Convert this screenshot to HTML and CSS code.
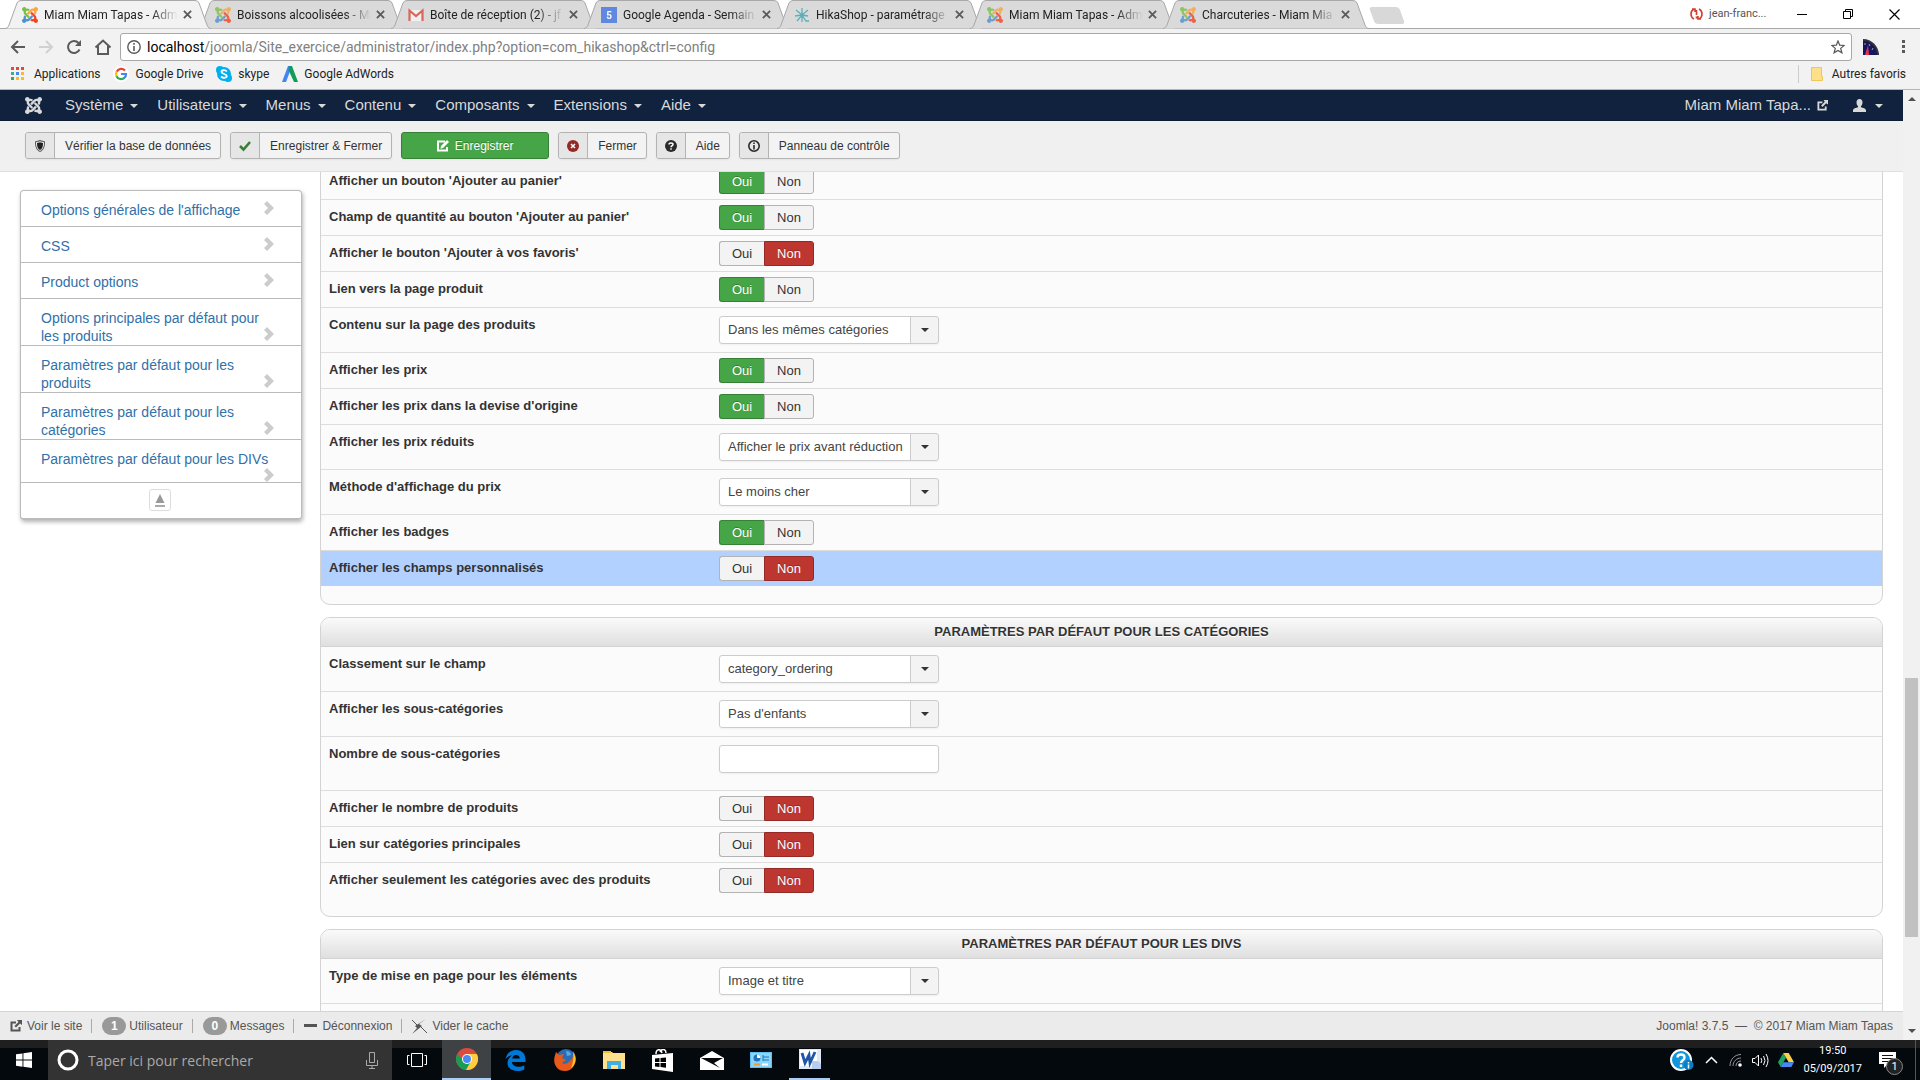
FILE: index.html
```html
<!DOCTYPE html>
<html lang="fr">
<head>
  <meta charset="UTF-8">
  <meta name="viewport" content="width=device-width, initial-scale=1.0">
  <link rel="stylesheet" href="styles.css">
  <title>Miam Miam Tapas - Administration</title>
</head>
<body>
<svg class="defs">
  <symbol id="joomla-arm" viewBox="0 0 24 24">
    <path d="M16.719 14.759L14.22 17.26l-2.37 2.37-.462.466c-1.368 1.365-3.297 1.83-5.047 1.397-.327 1.424-1.604 2.49-3.13 2.49C1.438 23.983 0 22.547 0 20.772c0-1.518 1.055-2.789 2.469-3.123-.446-1.76.016-3.705 1.396-5.08l.179-.18 2.37 2.37-.184.181c-.769.779-.769 2.024 0 2.789.771.78 2.022.78 2.787 0l.465-.465 2.367-2.371 2.502-2.506z"/>
  </symbol>
  <symbol id="joomla" viewBox="0 0 24 24">
    <g fill="#5091cd"><use href="#joomla-arm" width="24" height="24"/></g>
    <g fill="#7ac143" transform="rotate(90 12 12)"><use href="#joomla-arm" width="24" height="24"/></g>
    <g fill="#f9a541" transform="rotate(180 12 12)"><use href="#joomla-arm" width="24" height="24"/></g>
    <g fill="#f44321" transform="rotate(270 12 12)"><use href="#joomla-arm" width="24" height="24"/></g>
  </symbol>
  <symbol id="joomla-mono" viewBox="0 0 24 24">
    <use href="#joomla-arm" width="24" height="24"/>
    <g transform="rotate(90 12 12)"><use href="#joomla-arm" width="24" height="24"/></g>
    <g transform="rotate(180 12 12)"><use href="#joomla-arm" width="24" height="24"/></g>
    <g transform="rotate(270 12 12)"><use href="#joomla-arm" width="24" height="24"/></g>
  </symbol>
  <symbol id="tab-shape" viewBox="0 0 206 29" preserveAspectRatio="none">
    <path d="M0 28.500C3 28 3 27 4 25L12 3Q13 .5 16 .5H190Q193 .5 194 3L202 25C203 27 203 28 206 28.500"/>
  </symbol>
  <symbol id="cross" viewBox="0 0 10 10"><path d="M1 1l8 8M9 1l-8 8" stroke="currentColor" stroke-width="2"/></symbol>
  <symbol id="chevron" viewBox="0 0 10 14"><path d="M0 3l3-3 7 7-7 7-3-3 4-4z"/></symbol>
  <symbol id="external" viewBox="0 0 12 12">
    <path d="M6 2.500H1.500v8h8V7" fill="none" stroke="currentColor" stroke-width="2"/>
    <path d="M7 0h5v5l-2-1.500L6 7.500 4.500 6l4-4z"/>
  </symbol>
  <symbol id="chrome" viewBox="0 0 22 22">
    <circle cx="11" cy="11" r="11" fill="#dd4b3e"/>
    <path d="M1.500 5.500A11 11 0 0 0 10 22l4.700-8.500L11 11H6z" fill="#1a9c55"/>
    <path d="M11 6h9.800A11 11 0 0 1 10 22l5-9z" fill="#fdcd3f"/>
    <circle cx="11" cy="11" r="5" fill="#fff"/><circle cx="11" cy="11" r="4" fill="#4a8af4"/>
  </symbol>
</svg>

<!-- browser -->
<header class="browser">
  <div class="tabstrip">
    <div class="tab active">
      <svg class="tab-bg"><use href="#tab-shape"/></svg>
      <svg class="favicon"><use href="#joomla"/></svg><span class="tab-title">Miam Miam Tapas - Adm</span>
      <button class="tab-close" aria-label="Fermer l'onglet"><svg><use href="#cross"/></svg></button>
    </div>
    <div class="tab">
      <svg class="tab-bg"><use href="#tab-shape"/></svg>
      <svg class="favicon"><use href="#joomla"/></svg><span class="tab-title">Boissons alcoolisées - Mi</span>
      <button class="tab-close" aria-label="Fermer l'onglet"><svg><use href="#cross"/></svg></button>
    </div>
    <div class="tab">
      <svg class="tab-bg"><use href="#tab-shape"/></svg>
      <svg class="favicon" viewBox="0 0 16 16"><path d="M1 3h14v11H1z" fill="#f6f6f6"/><path d="M1.500 14V3.500L8 9l6.500-5.500V14" fill="none" stroke="#d9493c" stroke-width="2.200"/></svg><span class="tab-title">Boîte de réception (2) - jf</span>
      <button class="tab-close" aria-label="Fermer l'onglet"><svg><use href="#cross"/></svg></button>
    </div>
    <div class="tab">
      <svg class="tab-bg"><use href="#tab-shape"/></svg>
      <span class="favicon agenda">5</span><span class="tab-title">Google Agenda - Semain</span>
      <button class="tab-close" aria-label="Fermer l'onglet"><svg><use href="#cross"/></svg></button>
    </div>
    <div class="tab">
      <svg class="tab-bg"><use href="#tab-shape"/></svg>
      <svg class="favicon" viewBox="0 0 16 16"><path d="M8 1v14M2 3l6 5 6-5M1 9l7-1 6 1M3 14l5-6 4 6h3" fill="none" stroke="#3ba5b5" stroke-width="1.300"/></svg><span class="tab-title">HikaShop - paramétrage</span>
      <button class="tab-close" aria-label="Fermer l'onglet"><svg><use href="#cross"/></svg></button>
    </div>
    <div class="tab">
      <svg class="tab-bg"><use href="#tab-shape"/></svg>
      <svg class="favicon"><use href="#joomla"/></svg><span class="tab-title">Miam Miam Tapas - Adm</span>
      <button class="tab-close" aria-label="Fermer l'onglet"><svg><use href="#cross"/></svg></button>
    </div>
    <div class="tab">
      <svg class="tab-bg"><use href="#tab-shape"/></svg>
      <svg class="favicon"><use href="#joomla"/></svg><span class="tab-title">Charcuteries - Miam Mia</span>
      <button class="tab-close" aria-label="Fermer l'onglet"><svg><use href="#cross"/></svg></button>
    </div>
    <button class="new-tab" aria-label="Nouvel onglet"></button>
    <div class="window-tools">
      <svg width="13" height="12" viewBox="0 0 13 12"><path d="M4 1C0 3 0 9 4 11M9 1c4 2 4 8 0 10M2 1h3v3M11 11H8V8M6.500 2v5M6.500 8.500v2" fill="none" stroke="#d23f31" stroke-width="1.600"/></svg>
      <span class="profile">jean-franc...</span>
      <button aria-label="Réduire"><svg width="10" height="12"><path d="M0 6.500h10" stroke="#000"/></svg></button>
      <button aria-label="Restaurer"><svg width="10" height="10"><path d="M.5 2.500h7v7h-7zM2.500 2.500v-2h7v7h-2" fill="none" stroke="#000"/></svg></button>
      <button aria-label="Fermer"><svg width="11" height="11"><path d="M.5.5l10 10M10.500.5l-10 10" stroke="#000" stroke-width="1.200"/></svg></button>
    </div>
  </div>
  <div class="addressbar">
    <button aria-label="Précédent"><svg width="16" height="16" viewBox="0 0 16 16"><path d="M15 8H2M8 2L2 8l6 6" fill="none" stroke="#5a5a5a" stroke-width="2"/></svg></button>
    <button aria-label="Suivant"><svg width="16" height="16" viewBox="0 0 16 16"><path d="M1 8h13M8 2l6 6-6 6" fill="none" stroke="#d0d0d0" stroke-width="2"/></svg></button>
    <button aria-label="Actualiser"><svg width="16" height="16" viewBox="0 0 16 16"><path d="M13.500 10.500A6 6 0 1 1 12.500 4" fill="none" stroke="#5a5a5a" stroke-width="2"/><path d="M15 1v6H9z" fill="#5a5a5a"/></svg></button>
    <button aria-label="Accueil"><svg width="18" height="16" viewBox="0 0 18 16"><path d="M1.500 8.500L9 1.500l7.500 7M4 7v8h10V7" fill="none" stroke="#5a5a5a" stroke-width="2"/></svg></button>
    <div class="url">
      <svg width="14" height="14" viewBox="0 0 14 14"><circle cx="7" cy="7" r="6.200" fill="none" stroke="#5a5a5a" stroke-width="1.400"/><path d="M7 6v5M7 3v1.800" stroke="#5a5a5a" stroke-width="1.600"/></svg>
      <span class="url-text"><b>localhost</b>/joomla/Site_exercice/administrator/index.php?option=com_hikashop&amp;ctrl=config</span>
      <svg width="14" height="14" viewBox="0 0 14 14"><path d="M7 1l1.700 4.200 4.500.3-3.500 2.900 1.200 4.400L7 10.400l-3.900 2.400 1.200-4.400L.8 5.500l4.500-.3z" fill="none" stroke="#555" stroke-width="1.200"/></svg>
    </div>
    <svg width="16" height="16" viewBox="0 0 16 16"><path d="M0 16V0c9 0 15 7 16 15v1z" fill="#333"/><path d="M0 16V2c8 0 13 6 14 13v1z" fill="#16165e"/><path d="M2 16L5 6l1 10z" fill="#f0304a"/><path d="M1 5h2M6 5l1 2M10 9l-1 2" stroke="#9ab" /></svg>
    <svg class="menu-dots" width="4" height="14" viewBox="0 0 4 14"><path d="M0 0h3v3H0zM0 5h3v3H0zM0 10h3v3H0z" fill="#5a5a5a"/></svg>
  </div>
  <div class="bookmarks">
    <a href="#"><svg width="17" height="14" viewBox="0 0 17 14"><path d="M0 0h3v3H0zM5 0h3v3H5zM10 0h3v3h-3z" fill="#e8453c"/><path d="M0 5h3v3H0z" fill="#4a8"/><path d="M5 5h3v3H5z" fill="#4688f1"/><path d="M10 5h3v3h-3zM5 10h3v3H5zM10 10h3v3h-3z" fill="#f9bb2d"/><path d="M0 10h3v3H0z" fill="#3aa757"/></svg>Applications</a>
    <a href="#"><svg width="16" height="16" viewBox="0 0 16 16"><circle cx="8" cy="8" r="8" fill="#fff"/><g fill="none" stroke-width="2.200"><path d="M12 4.500A5 5 0 0 0 3.700 5.800" stroke="#ea4335"/><path d="M3.700 5.500a5 5 0 0 0 0 5" stroke="#fbbc05"/><path d="M3.500 10.200a5 5 0 0 0 8 1.500" stroke="#34a853"/><path d="M8 8h5a5 5 0 0 1-1.800 4" stroke="#4285f4"/></g></svg>Google Drive</a>
    <a href="#"><svg width="16" height="16" viewBox="0 0 16 16"><circle cx="8" cy="8" r="7" fill="#00aff0"/><circle cx="4" cy="4" r="4" fill="#00aff0"/><circle cx="12" cy="12" r="4" fill="#00aff0"/><path d="M10.800 5.500C9 3.500 5.500 4 5.500 6S10.800 8 10.800 10 7 12.500 5 10.500" fill="none" stroke="#fff" stroke-width="1.800"/></svg>skype</a>
    <a href="#"><svg width="16" height="16" viewBox="0 0 16 16"><path d="M6 0h4L4 16H0z" fill="#4285f4"/><path d="M7 0h3l6 16h-4L6.500 4z" fill="#0f9d58"/></svg>Google AdWords</a>
    <a class="others" href="#"><svg width="12" height="14" viewBox="0 0 12 14"><path d="M.5.500h10v9h1v4H.5z" fill="#ffe08a" stroke="#efc754"/></svg>Autres favoris</a>
  </div>
</header>

<div class="viewport">
<div class="page">
  <nav class="navbar">
    <a class="brand" href="#" aria-label="Joomla"><svg width="17" height="17"><use href="#joomla-mono"/></svg></a>
    <a class="drop" href="#">Système</a>
    <a class="drop" href="#">Utilisateurs</a>
    <a class="drop" href="#">Menus</a>
    <a class="drop" href="#">Contenu</a>
    <a class="drop" href="#">Composants</a>
    <a class="drop" href="#">Extensions</a>
    <a class="drop" href="#">Aide</a>
    <a class="site" href="#">Miam Miam Tapa...<svg width="11" height="11"><use href="#external"/></svg></a>
    <a class="user drop" href="#" aria-label="Utilisateur"><svg width="13" height="13" viewBox="0 0 13 13"><path d="M6.500 0c2 0 3 1.500 3 3.500 0 1.500-.7 3-1.500 3.600v1.200c2 .7 5 1.200 5 3.200V13H0v-1.500c0-2 3-2.500 5-3.200V7.100c-.8-.6-1.500-2.100-1.500-3.600C3.500 1.500 4.500 0 6.500 0z"/></svg></a>
  </nav>

  <div class="toolbar">
    <button class="btn"><span class="btn-icon"><svg viewBox="0 0 12 12"><path d="M6 0l5 1.500C11 7 10 10 6 12 2 10 1 7 1 1.500z" fill="#555"/><path d="M6 1.200L10 2.300C10 7 9 9.500 6 11 3 9.500 2 7 2 2.300z" fill="#eee"/><path d="M6 2.200L9 3C9 7 8.300 8.800 6 10 3.700 8.800 3 7 3 3z" fill="#222"/></svg></span><span class="btn-text">Vérifier la base de données</span></button>
    <button class="btn"><span class="btn-icon"><svg viewBox="0 0 12 12"><path d="M1 6l3.500 3.500L11 2" fill="none" stroke="#378137" stroke-width="2.600"/></svg></span><span class="btn-text">Enregistrer &amp; Fermer</span></button>
    <button class="btn save"><svg viewBox="0 0 12 12"><path d="M8 1.500H1v9h9V7" fill="none" stroke="#fff" stroke-width="2"/><path d="M10 0l2 2-6 6-2.500.7L4 6z" fill="#fff"/></svg>Enregistrer</button>
    <button class="btn"><span class="btn-icon"><svg viewBox="0 0 12 12"><circle cx="6" cy="6" r="6" fill="#942a25"/><path d="M4 4l4 4M8 4l-4 4" stroke="#fff" stroke-width="1.500"/></svg></span><span class="btn-text">Fermer</span></button>
    <button class="btn"><span class="btn-icon"><svg viewBox="0 0 12 12"><circle cx="6" cy="6" r="6" fill="#2a2a2a"/><path d="M4 4.500C4 2.500 8 2.500 8 4.500 8 6 6 5.500 6 7.200M6 8.200v1.600" fill="none" stroke="#fff" stroke-width="1.500"/></svg></span><span class="btn-text">Aide</span></button>
    <button class="btn"><span class="btn-icon"><svg viewBox="0 0 12 12"><circle cx="6" cy="6" r="5.200" fill="none" stroke="#2a2a2a" stroke-width="1.600"/><path d="M6 5v4.500M6 2.500v1.500" stroke="#2a2a2a" stroke-width="1.600"/></svg></span><span class="btn-text">Panneau de contrôle</span></button>
  </div>

  <div class="columns">
    <aside class="sidemenu">
      <a href="#"><span>Options générales de l'affichage</span><svg><use href="#chevron"/></svg></a>
      <a href="#"><span>CSS</span><svg><use href="#chevron"/></svg></a>
      <a href="#"><span>Product options</span><svg><use href="#chevron"/></svg></a>
      <a class="long" href="#"><span>Options principales par défaut pour les produits</span><svg><use href="#chevron"/></svg></a>
      <a class="long" href="#"><span>Paramètres par défaut pour les produits</span><svg><use href="#chevron"/></svg></a>
      <a class="long" href="#"><span>Paramètres par défaut pour les catégories</span><svg><use href="#chevron"/></svg></a>
      <a class="long wrapped" href="#"><span>Paramètres par défaut pour les DIVs</span><svg><use href="#chevron"/></svg></a>
      <div class="totop"><button aria-label="Haut de page"><svg width="10" height="13" viewBox="0 0 10 13"><path d="M5 0l4.500 9h-9z" fill="#999"/><path d="M0 11h10v2H0z" fill="#aaa"/></svg></button></div>
    </aside>

    <main class="config">
      <section class="panel first">
        <table>
          <tr><th>Afficher un bouton 'Ajouter au panier'</th>
            <td><div class="toggle"><input type="radio" name="cart" id="cart1" checked><label for="cart1">Oui</label><input type="radio" name="cart" id="cart0"><label class="no" for="cart0">Non</label></div></td></tr>
          <tr><th>Champ de quantité au bouton 'Ajouter au panier'</th>
            <td><div class="toggle"><input type="radio" name="qty" id="qty1" checked><label for="qty1">Oui</label><input type="radio" name="qty" id="qty0"><label class="no" for="qty0">Non</label></div></td></tr>
          <tr><th>Afficher le bouton 'Ajouter à vos favoris'</th>
            <td><div class="toggle"><input type="radio" name="wish" id="wish1"><label for="wish1">Oui</label><input type="radio" name="wish" id="wish0" checked><label class="no" for="wish0">Non</label></div></td></tr>
          <tr><th>Lien vers la page produit</th>
            <td><div class="toggle"><input type="radio" name="link" id="link1" checked><label for="link1">Oui</label><input type="radio" name="link" id="link0"><label class="no" for="link0">Non</label></div></td></tr>
          <tr class="field"><th><label for="content">Contenu sur la page des produits</label></th>
            <td><div class="select"><select id="content"><option>Dans les mêmes catégories</option></select></div></td></tr>
          <tr><th>Afficher les prix</th>
            <td><div class="toggle"><input type="radio" name="price" id="price1" checked><label for="price1">Oui</label><input type="radio" name="price" id="price0"><label class="no" for="price0">Non</label></div></td></tr>
          <tr><th>Afficher les prix dans la devise d'origine</th>
            <td><div class="toggle"><input type="radio" name="orig" id="orig1" checked><label for="orig1">Oui</label><input type="radio" name="orig" id="orig0"><label class="no" for="orig0">Non</label></div></td></tr>
          <tr class="field"><th><label for="discount">Afficher les prix réduits</label></th>
            <td><div class="select"><select id="discount"><option>Afficher le prix avant réduction</option></select></div></td></tr>
          <tr class="field"><th><label for="method">Méthode d'affichage du prix</label></th>
            <td><div class="select"><select id="method"><option>Le moins cher</option></select></div></td></tr>
          <tr><th>Afficher les badges</th>
            <td><div class="toggle"><input type="radio" name="badge" id="badge1" checked><label for="badge1">Oui</label><input type="radio" name="badge" id="badge0"><label class="no" for="badge0">Non</label></div></td></tr>
          <tr class="hover"><th>Afficher les champs personnalisés</th>
            <td><div class="toggle"><input type="radio" name="custom" id="custom1"><label for="custom1">Oui</label><input type="radio" name="custom" id="custom0" checked><label class="no" for="custom0">Non</label></div></td></tr>
        </table>
      </section>

      <section class="panel">
        <h2>Paramètres par défaut pour les catégories</h2>
        <table>
          <tr class="field"><th><label for="order">Classement sur le champ</label></th>
            <td><div class="select"><select id="order"><option>category_ordering</option></select></div></td></tr>
          <tr class="field"><th><label for="child">Afficher les sous-catégories</label></th>
            <td><div class="select"><select id="child"><option>Pas d'enfants</option></select></div></td></tr>
          <tr class="text"><th><label for="number">Nombre de sous-catégories</label></th>
            <td><input type="text" id="number"></td></tr>
          <tr><th>Afficher le nombre de produits</th>
            <td><div class="toggle"><input type="radio" name="count" id="count1"><label for="count1">Oui</label><input type="radio" name="count" id="count0" checked><label class="no" for="count0">Non</label></div></td></tr>
          <tr><th>Lien sur catégories principales</th>
            <td><div class="toggle"><input type="radio" name="main" id="main1"><label for="main1">Oui</label><input type="radio" name="main" id="main0" checked><label class="no" for="main0">Non</label></div></td></tr>
          <tr><th>Afficher seulement les catégories avec des produits</th>
            <td><div class="toggle"><input type="radio" name="only" id="only1"><label for="only1">Oui</label><input type="radio" name="only" id="only0" checked><label class="no" for="only0">Non</label></div></td></tr>
        </table>
      </section>

      <section class="panel">
        <h2>Paramètres par défaut pour les DIVs</h2>
        <table>
          <tr class="field"><th><label for="layout">Type de mise en page pour les éléments</label></th>
            <td><div class="select"><select id="layout"><option>Image et titre</option></select></div></td></tr>
          <tr class="field"><th></th><td></td></tr>
        </table>
      </section>
    </main>
  </div>

  <footer class="status">
    <a href="#"><svg width="12" height="12"><use href="#external"/></svg>Voir le site</a>
    <a href="#"><span class="badge">1</span>Utilisateur</a>
    <a href="#"><span class="badge">0</span>Messages</a>
    <a href="#"><svg width="13" height="4"><path d="M0 0h13v3H0z"/></svg>Déconnexion</a>
    <a href="#"><svg width="15" height="15" viewBox="0 0 15 15"><path d="M0 1l6 6M9 8l6 6" stroke="#555"/><path d="M14 0L7 5l3 2-10 8 5-6-2-2z"/></svg>Vider le cache</a>
    <span class="copyright">Joomla! 3.7.5 &nbsp;—&nbsp; © 2017 Miam Miam Tapas</span>
  </footer>
</div>
<div class="scrollbar"><i class="up"></i><div class="thumb"></div><i class="down"></i></div>
</div>

<!-- windows taskbar -->
<div class="taskbar">
  <button class="start" aria-label="Démarrer"><svg width="16" height="16" viewBox="0 0 16 16" fill="#fff"><path d="M0 2.300L6.500 1.400v6.200H0zM7.400 1.300L16 0v7.600H7.400zM0 8.500h6.500v6.200L0 13.800zM7.400 8.500H16V16l-8.600-1.200z"/></svg></button>
  <label class="search"><svg width="22" height="22"><circle cx="11" cy="11" r="9" fill="none" stroke="#fff" stroke-width="3"/></svg><input type="text" placeholder="Taper ici pour rechercher"><svg width="12" height="17" viewBox="0 0 12 17"><path d="M3.500.5h5v10h-5zM.5 8v5.500h11V8M6 13.500v3M3 16.500h6" fill="none" stroke="#aaa"/></svg></label>
  <button class="taskview" aria-label="Vue des tâches"><svg width="20" height="14" viewBox="0 0 20 14"><path d="M4.500.5h11v13h-11zM2.500 2.500h-2v9h2M17.500 2.500h2v9h-2" fill="none" stroke="#fff"/></svg></button>
  <button class="app current" aria-label="Chrome"><svg width="22" height="22"><use href="#chrome"/></svg></button>
  <button class="app" aria-label="Edge"><svg width="21" height="21" viewBox="0 0 21 21"><path d="M.5 9.500C1.500 3 6 0 11 0c6 0 9.500 4 9.500 9.500V12H7c.3 3.500 3.500 4.800 6.500 4.800 2.300 0 4-.6 5.800-1.600v4.300c-2 1-4.300 1.500-7 1.500C6 21 2.500 17.500 2.500 13c0-4 2.500-6.500 5-7.800C4.500 5.500 2 7 .5 9.500zM7.200 8.500h7.600C14.800 6 13 5 11 5S7.500 6.500 7.200 8.500z" fill="#0078d7"/></svg></button>
  <button class="app" aria-label="Firefox"><svg width="22" height="22" viewBox="0 0 22 22"><circle cx="12" cy="10" r="10" fill="#2a6db5"/><path d="M19 2c5 6 3 20-8 20C3 22-1 15 .5 8L2 3l3 3 5-1-2 4 4 2-4 3c3 2 6 0 8-2 3-3 4-6 3-10z" fill="#e8591a"/><path d="M19 3c4 5 3 13-2 16 2-5 3-11 2-16z" fill="#fbc42c"/><path d="M12 2c3 0 5 2 5 4l-4 1z" fill="#58a9dc"/></svg></button>
  <button class="app" aria-label="Explorateur"><svg width="22" height="18" viewBox="0 0 22 18"><path d="M0 1h9l1 1h12v16H0z" fill="#ffe08c"/><path d="M0 0h8v2H0z" fill="#f4bd33"/><path d="M4 10h14v8h-3v-4H8v4H4z" fill="#3eb0e6"/></svg></button>
  <button class="app" aria-label="Store"><svg width="21" height="23" viewBox="0 0 21 23"><path d="M0 6l21-2v19L0 20z" fill="#fff"/><path d="M4 5c0-5 5-6 6-1M8 3c2-4 6-3 6 1" fill="none" stroke="#fff" stroke-width="1.500"/><path d="M3 9.500l4.500-.4v4H3zM8.500 9l5.500-.5v4.600H8.500zM3 14h4.500v4L3 17.400zM8.500 14H14v4.800l-5.500-.7z" fill="#000"/></svg></button>
  <button class="app" aria-label="Courrier"><svg width="24" height="19" viewBox="0 0 24 19"><path d="M0 7l12-7 12 7v12H0z" fill="#fff"/><path d="M1 7h22l-9 5 6 5z" fill="#05090c"/></svg></button>
  <button class="app" aria-label="Panneau"><svg width="22" height="16" viewBox="0 0 22 16"><path d="M0 0h22v16H0z" fill="#5cc0f2"/><path d="M1 1h20v14H1z" fill="#8ad6fa"/><circle cx="7" cy="6" r="3.500" fill="#2274b8"/><path d="M7 6V2.500A3.500 3.500 0 0 1 10.500 6z" fill="#fff"/><path d="M13 5h6M13 8h6M13 3v6" stroke="#2274b8"/><path d="M4 12.500h6" stroke="#f29a2e" stroke-width="2"/><path d="M12 12.500h6" stroke="#fff" stroke-width="2"/></svg></button>
  <button class="app opened" aria-label="Word"><svg width="22" height="22" viewBox="0 0 22 22"><path d="M0 1h22v20H0z" fill="#dfe9f7"/><path d="M1 2h17v16H1z" fill="#fff"/><path d="M3 5l3 10 4-8 1 8 5-11" fill="none" stroke="#1d56a8" stroke-width="2.800"/><path d="M13 13h6l3 3v5h-9z" fill="#b7cdee"/></svg></button>
  <div class="tray">
    <svg width="24" height="22" viewBox="0 0 24 22"><circle cx="11" cy="11" r="10" fill="#1296db" stroke="#fff" stroke-width="2"/><path d="M7.500 8.500C7.500 4.500 14.500 4.500 14.500 8.500c0 3-3.500 2.500-3.500 5.500M11 15.500V18" fill="none" stroke="#fff" stroke-width="2.400"/><circle cx="18.500" cy="16" r="5" fill="#0b7fc4"/><path d="M18.500 13v1.500M18.500 15.500v4" stroke="#fff" stroke-width="1.500"/></svg>
    <svg width="17" height="8" viewBox="0 0 17 8"><path d="M3 7l5.500-5.500L14 7" fill="none" stroke="#fff" stroke-width="1.500"/></svg>
    <svg width="14" height="14" viewBox="0 0 14 14"><path d="M1 13C1 6 6 1.500 12 1.500M4 13c0-5 4-8 8-8M7 13c0-3 2-5 5-5" fill="none" stroke="#999"/><circle cx="11" cy="12" r="1.800" fill="#fff"/></svg>
    <svg width="17" height="15" viewBox="0 0 17 15"><path d="M.5 5.500H3L6.500 2v11L3 9.500H.5zM9 5q1.500 2.500 0 5M11.500 3q3 4.500 0 9M14 1q4 6.500 0 13" fill="none" stroke="#fff"/></svg>
    <svg width="16" height="14" viewBox="0 0 16 14"><path d="M5.300 0L0 9.300 2.700 14 8 4.700z" fill="#1fa463"/><path d="M5.300 0h5.400L16 9.300h-5.300z" fill="#ffd04b"/><path d="M5.300 9.300H16L13.300 14H2.700z" fill="#4688f4"/></svg>
    <div class="clock"><span>19:50</span><span>05/09/2017</span></div>
    <div class="notif"><svg width="17" height="16" viewBox="0 0 17 16"><path d="M0 0h17v12H9l-4 4v-4H0z" fill="#fff"/><path d="M3 3.500h11M3 6.500h11M3 9.500h7" stroke="#111"/></svg><span>1</span></div>
  </div>
</div>
</body>
</html>
```
FILE: styles.css
```css
*{
  box-sizing: border-box;
}
body{
  margin: 0;
  height: 100vh;
  display: flex;
  flex-direction: column;
  overflow: hidden;
  font-family: "Liberation Sans", Arial, sans-serif;
  font-size: 13px;
  line-height: 18px;
  color: #333;
  background: #fff;
}
a{
  text-decoration: none;
  color: inherit;
}
button{
  font-family: inherit;
  border: none;
  padding: 0;
  background: none;
}
svg{
  flex: none;
  display: block;
}
.defs{
  position: absolute;
  width: 0;
  height: 0;
}

/* browser window */
.browser{
  background: #f2f2f2;
  border-bottom: 1px solid #b6b4b6;
  font-family: Roboto, "Open Sans", sans-serif;
  font-size: 12px;
  color: #222;
}
.tabstrip{
  display: flex;
  height: 29px;
  padding-left: 5px;
  background: #fff;
  border-bottom: 1px solid #a8a8a8;
}
.tab{
  position: relative;
  display: flex;
  align-items: center;
  width: 206px;
  height: 29px;
  margin-right: -13px;
  padding: 0 13px 0 17px;
}
.tab-bg{
  position: absolute;
  left: 0;
  top: 0;
  width: 206px;
  height: 29px;
  fill: #dadada;
  stroke: #a8a8a8;
}
.tab.active{
  z-index: 2;
}
.tab.active .tab-bg{
  fill: #f2f2f2;
}
.favicon{
  position: relative;
  width: 16px;
  height: 16px;
  opacity: .8;
}
.active .favicon{
  opacity: 1;
}
.agenda{
  background: #4274e0;
  color: #fff;
  font-size: 10px;
  font-weight: bold;
  line-height: 17px;
  text-align: center;
}
.tab-title{
  position: relative;
  flex: 1;
  min-width: 0;
  margin-left: 6px;
  margin-right: 5px;
  white-space: nowrap;
  -webkit-mask-image: linear-gradient(to right, #000 80%, transparent);
  mask-image: linear-gradient(to right, #000 80%, transparent);
}
.tab-close{
  position: relative;
  color: #5a5a5a;
}
.tab-close svg{
  width: 9px;
  height: 9px;
  margin-right: 6px;
}
.new-tab{
  width: 30px;
  height: 17px;
  margin: 7px 0 0 16px;
  background: #d8d8d8;
  border-radius: 3px;
  transform: skewX(20deg);
}
.window-tools{
  display: flex;
  align-items: center;
  margin-left: auto;
  padding-right: 20px;
}
.profile{
  width: 60px;
  margin: 0 28px 0 6px;
  font-size: 11px;
  color: #555;
}
.window-tools button{
  width: 11px;
  margin-right: 35px;
}
.window-tools button:last-child{
  margin-right: 0;
}
.addressbar{
  display: flex;
  align-items: center;
  height: 36px;
  padding: 0 14px 0 10px;
}
.addressbar button{
  width: 18px;
  margin-right: 10px;
}
.url{
  flex: 1;
  display: flex;
  align-items: center;
  height: 28px;
  margin-right: 11px;
  margin-left: -2px;
  padding: 0 6px;
  background: #fff;
  border: 1px solid #a8a8a8;
  border-radius: 3px;
}
.url-text{
  flex: 1;
  margin-left: 6px;
  font-size: 14px;
  color: #808080;
}
.url-text b{
  font-weight: normal;
  color: #000;
}
.menu-dots{
  margin-left: 23px;
}
.bookmarks{
  display: flex;
  align-items: center;
  height: 24px;
  padding: 0 14px 6px 11px;
}
.bookmarks a{
  display: flex;
  align-items: center;
  gap: 6px;
  margin-right: 13px;
}
.bookmarks .others{
  gap: 9px;
  margin-left: auto;
  margin-right: 0;
  padding-left: 12px;
  border-left: 1px solid #ccc;
}

/* administration page */
.viewport{
  flex: 1;
  min-height: 0;
  display: flex;
}
.page{
  flex: 1;
  min-width: 0;
  display: flex;
  flex-direction: column;
}
.scrollbar{
  width: 17px;
  display: flex;
  flex-direction: column;
  align-items: center;
  background: #f1f1f1;
}
.scrollbar .thumb{
  width: 13px;
  height: 259px;
  margin-top: 577px;
  background: #c1c1c1;
}
.scrollbar i{
  border: 4px solid transparent;
}
.scrollbar .up{
  margin-top: 3px;
  border-bottom-color: #505050;
}
.scrollbar .down{
  margin-top: auto;
  margin-bottom: 3px;
  border-top-color: #505050;
}
.navbar{
  display: flex;
  align-items: center;
  height: 31px;
  padding: 0 20px 0 25px;
  background: #10223e;
  border-bottom: 1px solid #0d1c33;
  color: #d9d9d9;
  fill: #d9d9d9;
  font-size: 15px;
}
.navbar a{
  display: flex;
  align-items: center;
  margin-right: 19px;
}
.navbar .brand{
  margin-right: 23px;
}
.drop::after{
  content: "";
  margin-left: 7px;
  margin-top: 2px;
  border: 4px solid transparent;
  border-top-color: #d9d9d9;
  border-bottom: none;
}
.navbar .site{
  margin-left: auto;
  margin-right: 25px;
}
.site svg{
  margin-left: 6px;
}
.navbar .user{
  margin-right: 0;
}
.user::after{
  margin-left: 9px;
}
.toolbar{
  display: flex;
  gap: 9px;
  height: 51px;
  padding: 11px 25px;
  background: #f0f0f0;
  border-bottom: 1px solid #dfdfdf;
}
.btn{
  display: flex;
  height: 27px;
  font-size: 12px;
  line-height: 26px;
  color: #333;
  background: #f3f3f3;
  border: 1px solid #b3b3b3;
  border-radius: 3px;
  box-shadow: 0 1px 2px rgba(0,0,0,.05);
}
.btn svg{
  width: 12px;
  height: 12px;
}
.btn-icon{
  display: flex;
  align-items: center;
  justify-content: center;
  width: 29px;
  height: 25px;
  background: #e6e6e6;
  border-right: 1px solid #b3b3b3;
  border-radius: 3px 0 0 3px;
}
.btn-text{
  padding: 0 9px 0 10px;
}
.save{
  width: 148px;
  align-items: center;
  justify-content: center;
  gap: 6px;
  color: #fff;
  text-shadow: 0 -1px 0 rgba(0,0,0,.25);
  background: #46a546;
  border-color: #378137;
}
.columns{
  flex: 1;
  min-height: 0;
  display: flex;
  align-items: flex-start;
  overflow: hidden;
  padding: 0 20px;
}
.sidemenu{
  flex: none;
  width: 282px;
  margin: 18px 18px 0 0;
  border: 1px solid #bbb;
  border-bottom-width: 2px;
  border-radius: 4px;
  box-shadow: 1px 2px 4px rgba(0,0,0,.3);
  font-size: 14px;
  color: #3071a9;
}
.sidemenu a{
  display: flex;
  align-items: flex-end;
  height: 36px;
  padding: 8px 27px 9px 20px;
  border-bottom: 1px solid #bbb;
}
.sidemenu .long{
  height: auto;
  min-height: 43px;
  padding-bottom: 0;
}
.sidemenu span{
  flex: 1;
  align-self: flex-start;
  padding-top: 2px;
  margin-right: -10px;
}
.sidemenu a svg{
  width: 10px;
  height: 14px;
  margin-bottom: 2px;
  fill: #ccc;
}
.sidemenu .long svg{
  margin-bottom: 4px;
}
.sidemenu .wrapped svg{
  margin-bottom: 0;
}
.totop{
  display: flex;
  justify-content: center;
  padding: 6px 0 7px;
}
.totop button{
  display: flex;
  align-items: center;
  justify-content: center;
  width: 22px;
  height: 22px;
  margin-right: 2px;
  border: 1px solid #ddd;
  border-radius: 3px;
}
.config{
  flex: 1;
}
.panel{
  margin-bottom: 12px;
  padding-bottom: 18px;
  background: #fbfbfb;
  border: 1px solid #d3d3d3;
  border-radius: 10px;
  overflow: hidden;
}
/* list is scrolled under the toolbar */
.panel.first{
  margin-top: -9px;
}
.panel h2{
  margin: 0;
  height: 29px;
  line-height: 27px;
  font-size: 13px;
  text-align: center;
  text-transform: uppercase;
  text-shadow: 0 1px 0 #fff;
  background: linear-gradient(#fafafa, #dfdfdf);
  border-bottom: 1px solid #d3d3d3;
}
table{
  width: 100%;
  border-collapse: separate;
  border-spacing: 0;
}
tr{
  height: 36px;
}
tr.field{
  height: 45px;
}
tr.text{
  height: 54px;
}
th, td{
  padding: 5px 0 0;
  vertical-align: top;
  text-align: left;
  border-bottom: 1px solid #ddd;
}
th{
  width: 398px;
  padding: 8px 0 0 8px;
}
.field td, .text td{
  padding-top: 8px;
}
tr:last-child{
  height: 35px;
}
tr:last-child th, tr:last-child td{
  border-bottom: none;
}
.hover{
  background: #b3d1ff;
}
.toggle{
  position: relative;
  display: flex;
}
.toggle input{
  position: absolute;
  opacity: 0;
  margin: 0;
}
.toggle label{
  width: 45px;
  height: 25px;
  line-height: 23px;
  text-align: center;
  background: #f3f3f3;
  border: 1px solid #b3b3b3;
  border-right: none;
  border-radius: 3px 0 0 3px;
}
.toggle .no{
  width: 50px;
  border-right: 1px solid #b3b3b3;
  border-radius: 0 3px 3px 0;
}
.toggle input:checked + label{
  color: #fff;
  text-shadow: 0 -1px 0 rgba(0,0,0,.25);
  background: #46a546;
  border-color: #378137;
}
.toggle input:checked + .no{
  background: #bd362f;
  border-color: #942a25;
}
.select{
  position: relative;
  width: 220px;
}
.select::after{
  content: "";
  position: absolute;
  right: 10px;
  top: 12px;
  border: 4px solid transparent;
  border-top-color: #333;
  border-bottom: none;
}
select, .text input{
  display: block;
  width: 220px;
  height: 28px;
  padding: 0 8px 1px;
  font-family: inherit;
  font-size: 13px;
  color: #444;
  background: #fff;
  border: 1px solid #ccc;
  border-radius: 3px;
  box-shadow: 0 1px 2px rgba(0,0,0,.05);
}
select{
  appearance: none;
  background: linear-gradient(to left, #f3f3f3 27px, #ccc 27px, #ccc 28px, #fff 28px);
}
.status{
  display: flex;
  align-items: center;
  height: 29px;
  padding: 0 10px;
  background: #ebebeb;
  border-top: 1px solid #d4d4d4;
  font-size: 12px;
  color: #555;
  fill: #555;
}
.status a{
  display: flex;
  align-items: center;
  height: 14px;
  gap: 5px;
  padding-right: 9px;
  margin-right: 10px;
  border-right: 1px solid #aaa;
}
.status a:nth-child(5){
  border-right: none;
}
.badge{
  width: 24px;
  height: 18px;
  margin-right: -2px;
  border-radius: 9px;
  background: #999;
  color: #fff;
  font-weight: bold;
  text-align: center;
}
.copyright{
  margin-left: auto;
}

/* taskbar */
.taskbar{
  display: flex;
  align-items: stretch;
  height: 40px;
  background: linear-gradient(#1f1f1f 8px, #04090d 8px);
}
.taskbar button{
  display: flex;
  align-items: center;
  justify-content: center;
}
.start{
  width: 48px;
}
.search{
  display: flex;
  align-items: center;
  width: 344px;
  padding: 0 14px 0 9px;
  background: #333;
}
.search input{
  flex: 1;
  min-width: 0;
  margin-left: 7px;
  padding: 0 2px;
  border: none;
  background: none;
  font-family: "Open Sans", sans-serif;
  font-size: 14px;
  color: #aaa;
}
.search input::placeholder{
  color: #aaa;
}
.taskview{
  width: 50px;
}
.app{
  width: 49px;
}
.app.current{
  background: #3e4244;
  border-bottom: 2px solid #a9cdf5;
}
.app.opened{
  margin: 0 4px;
  width: 41px;
  border-bottom: 2px solid #a9cdf5;
}
.tray{
  display: flex;
  align-items: center;
  gap: 9px;
  margin-left: auto;
  margin-right: 4px;
  padding-right: 12px;
  border-right: 1px solid #555;
  color: #fff;
  font-family: Roboto, "Open Sans", sans-serif;
  font-size: 11px;
}
.clock{
  display: flex;
  flex-direction: column;
  align-items: center;
}
.notif{
  position: relative;
  width: 24px;
  margin-left: 8px;
}
.notif span{
  position: absolute;
  left: 7px;
  top: 6px;
  width: 17px;
  height: 17px;
  line-height: 15px;
  text-align: center;
  border: 1px solid #888;
  border-radius: 50%;
  background: #222;
}
```
